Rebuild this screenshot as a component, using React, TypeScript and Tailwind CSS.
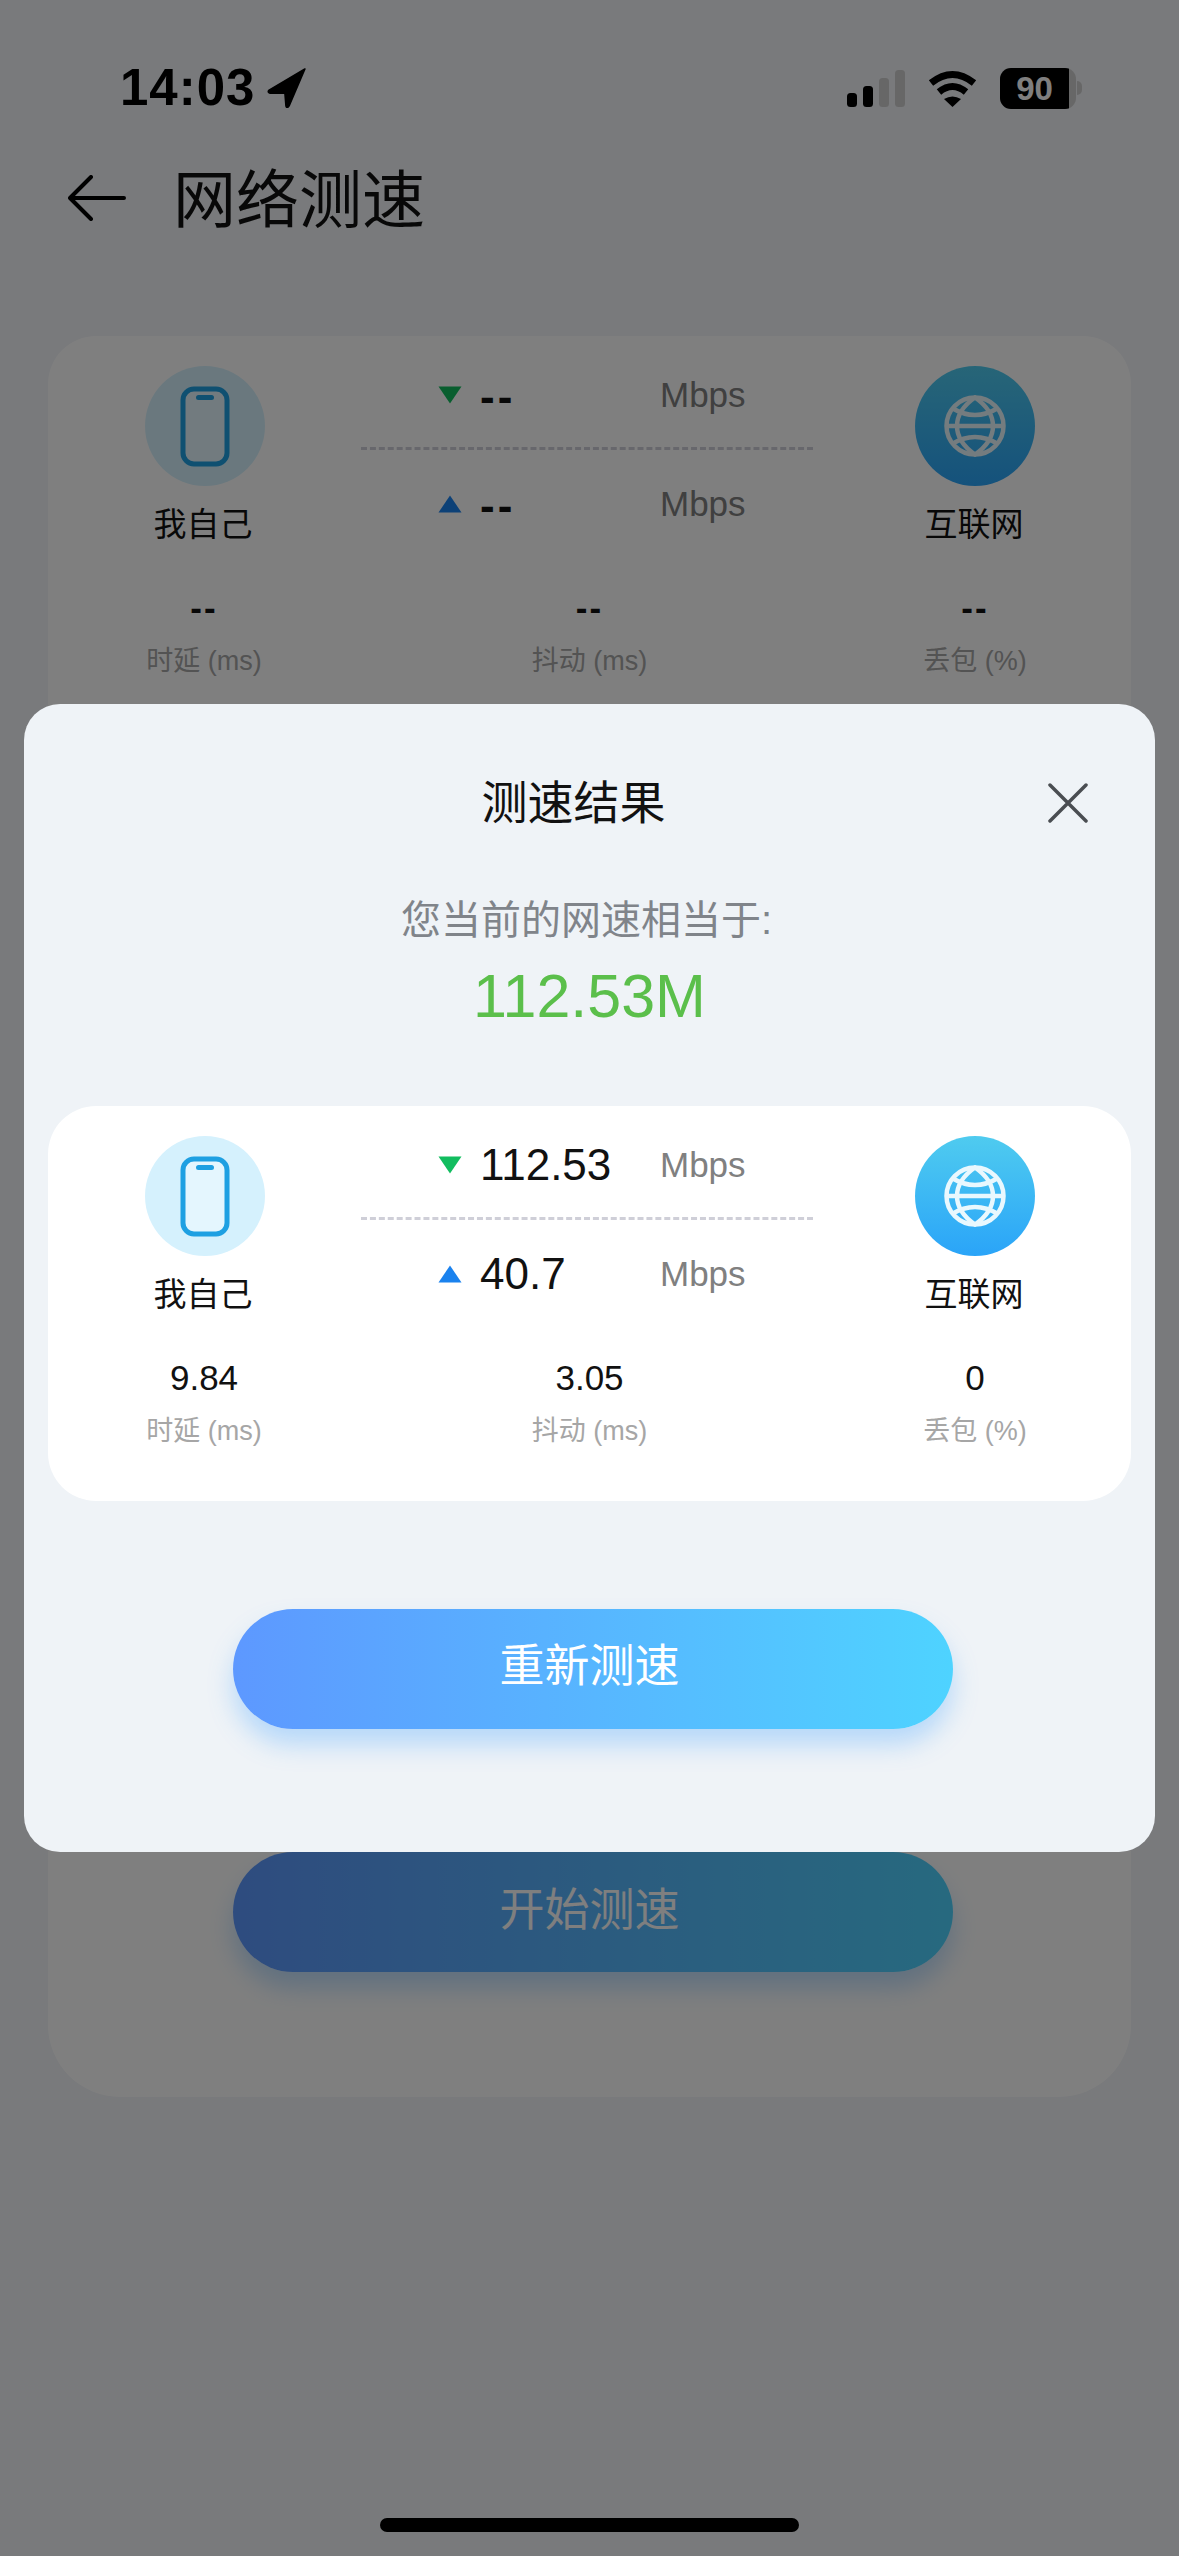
const FONT = "font-['Liberation_Sans','Noto_Sans_CJK_SC',sans-serif]";

function PhoneIcon() {
  return (
    <svg width="50" height="81" viewBox="0 0 50 81" fill="none">
      <rect x="3" y="3" width="44" height="75" rx="11" fill="#e4f6fe" stroke="#1ea0e2" strokeWidth="5" />
      <rect x="16" y="9" width="18" height="5" rx="2.5" fill="#1ea0e2" />
    </svg>
  );
}

function GlobeIcon() {
  return (
    <svg width="64" height="62" viewBox="0 0 64 62" fill="none" stroke="#e9f8fe" strokeWidth="4.5">
      <circle cx="32" cy="31" r="28.5" />
      <path d="M32 2.5Q14 15 14 31T32 59.5Q50 47 50 31T32 2.5Z" />
      <path d="M3.5 31H60.5M9 13Q32 27 55 13M9 49Q32 35 55 49" />
    </svg>
  );
}

function Triangle({ up }: { up?: boolean }) {
  return (
    <svg width="24" height="18" viewBox="0 0 24 18" className="shrink-0">
      {up ? (
        <path d="M12 0.5L23.5 17.5H0.5Z" fill="#1a82ee" />
      ) : (
        <path d="M0.5 0.5H23.5L12 17.5Z" fill="#12bd5f" />
      )}
    </svg>
  );
}

function SpeedRow({ up, value }: { up?: boolean; value: string }) {
  const empty = value === "--";
  return (
    <div className="flex h-[60px] items-center pl-[77px]">
      <Triangle up={up} />
      <div className={`ml-[18px] w-[180px] text-[44px] leading-[60px] text-[#111] ${empty ? "pt-[4px] font-bold tracking-[3px]" : ""}`}>{value}</div>
      <div className="text-[35px] leading-[60px] text-[#808080]">Mbps</div>
    </div>
  );
}

function Stat({ value, label }: { value: string; label: string }) {
  const empty = value === "--";
  return (
    <div className="flex flex-col items-center">
      <div className={`h-[40px] text-[35px] leading-[40px] text-[#111] ${empty ? "font-bold tracking-[2px]" : ""}`}>{value}</div>
      <div className="mt-[15px] h-[36px] text-[27px] leading-[36px] text-[#a6a6a6]">{label}</div>
    </div>
  );
}

function SpeedPanel({ down, up, stats }: { down: string; up: string; stats: string[] }) {
  return (
    <div className="h-[395px]">
      <div className="grid grid-cols-[312px_1fr_312px]">
        <div className="flex flex-col items-center pt-[30px]">
          <div className="ml-[2px] flex h-[120px] w-[120px] items-center justify-center rounded-full bg-[#d5f1fd]">
            <PhoneIcon />
          </div>
          <div className="mt-[17px] h-[44px] pr-[2px] text-[33px] leading-[44px] text-[#111]">我自己</div>
        </div>
        <div className="ml-[1px] w-[452px] pt-[29px]">
          <SpeedRow value={down} />
          <div className="mt-[22px] mb-[24px] border-t-[3px] border-dashed border-[#cfcfd8]" />
          <SpeedRow up value={up} />
        </div>
        <div className="flex flex-col items-center pt-[30px]">
          <div className="flex h-[120px] w-[120px] items-center justify-center rounded-full bg-gradient-to-b from-[#4fcbef] to-[#2aa4f8]">
            <GlobeIcon />
          </div>
          <div className="mt-[17px] h-[44px] pr-[2px] text-[33px] leading-[44px] text-[#111]">互联网</div>
        </div>
      </div>
      <div className="mt-[41px] grid grid-cols-[312px_1fr_312px]">
        <Stat value={stats[0]} label="时延 (ms)" />
        <Stat value={stats[1]} label="抖动 (ms)" />
        <Stat value={stats[2]} label="丢包 (%)" />
      </div>
    </div>
  );
}

function StatusBar() {
  return (
    <div className="flex h-[130px] items-center justify-between pt-[46px] pr-[97px] pl-[120px]">
      <div className="flex items-center">
        <span className="text-[51px] leading-[50px] font-bold tracking-[1px] text-black">14:03</span>
        <svg width="40" height="40" viewBox="0 0 38 38" className="ml-[12px]">
          <path d="M36 1L2 21Q0 23 3 24L17 24L18 36Q19 39 21 36Z" fill="#000" stroke="#000" strokeWidth="1.5" strokeLinejoin="round" />
        </svg>
      </div>
      <div className="flex items-center">
        <svg width="58" height="37" viewBox="0 0 58 37">
          <rect x="0" y="23" width="10" height="14" rx="3.5" fill="#000" />
          <rect x="16" y="16" width="10" height="21" rx="3.5" fill="#000" />
          <rect x="32" y="8" width="10" height="29" rx="3.5" fill="#cfcfcf" />
          <rect x="48" y="0" width="10" height="37" rx="3.5" fill="#cfcfcf" />
        </svg>
        <svg width="49" height="37" viewBox="0 0 49 37" fill="none" className="ml-[23px]">
          <path d="M3 13Q24.5 -4 46 13" stroke="#000" strokeWidth="7" />
          <path d="M11 22Q24.5 11 38 22" stroke="#000" strokeWidth="7" />
          <path d="M16 29Q24.5 24 33 29L24.5 37Z" fill="#000" />
        </svg>
        <div className="ml-[23px] flex items-center">
          <div className="flex h-[41px] w-[76px] overflow-hidden rounded-[11px] bg-[#cfcfcf]">
            <div className="flex h-full w-[69px] items-center justify-center bg-black text-[33px] leading-none font-bold text-white">90</div>
          </div>
          <div className="ml-[1px] h-[14px] w-[5px] rounded-r-full bg-[#cfcfcf]" />
        </div>
      </div>
    </div>
  );
}

export default function App() {
  return (
    <div className={`relative h-[2556px] w-[1179px] overflow-hidden bg-[#f2f4f8] ${FONT}`}>
      <StatusBar />
      <div className="flex h-[136px] items-center pl-[68px]">
        <svg width="58" height="46" viewBox="0 0 58 46" fill="none" stroke="#000" strokeWidth="4" strokeLinecap="round" strokeLinejoin="round">
          <path d="M56 23H3M23 2L2 23L23 44" />
        </svg>
        <div className="ml-[47px] pt-[4px] text-[63px] leading-[80px] text-[#111]">网络测速</div>
      </div>

      <div className="mx-[48px] mt-[70px] h-[1761px] rounded-t-[48px] rounded-b-[72px] bg-white">
        <SpeedPanel down="--" up="--" stats={["--", "--", "--"]} />
        <div className="mt-[1121px] ml-[185px] flex h-[120px] w-[720px] items-center justify-center rounded-full bg-gradient-to-r from-[#5d98ff] to-[#4ed3ff] pr-[7px] pb-[2px] text-[45px] text-white shadow-[0_16px_24px_rgba(80,170,255,0.35)]">
          开始测速
        </div>
      </div>

      <div className="mx-auto mt-[421px] h-[14px] w-[419px] rounded-full bg-black" />

      <div className="absolute inset-0 bg-black/50" />

      <div className="absolute top-[704px] left-[24px] h-[1148px] w-[1131px] rounded-[36px] bg-[#eff3f7]">
        <div className="relative mt-[72px] flex h-[54px] items-center justify-center pr-[32px] text-[46px] leading-[54px] text-[#111]">
          测速结果
          <svg width="40" height="40" viewBox="0 0 40 40" fill="none" stroke="#4a4d52" strokeWidth="3.5" strokeLinecap="round" className="absolute top-[7px] right-[67px]">
            <path d="M2 2L38 38M38 2L2 38" />
          </svg>
        </div>
        <div className="mt-[66px] pr-[6px] text-center text-[40px] leading-[48px] text-[#80848a]">您当前的网速相当于:</div>
        <div className="mt-[16px] text-center text-[61px] leading-[72px] text-[#5bbf4b]">112.53M</div>
        <div className="mx-[24px] mt-[74px] h-[395px] rounded-[48px] bg-white">
          <SpeedPanel down="112.53" up="40.7" stats={["9.84", "3.05", "0"]} />
        </div>
        <div className="mt-[108px] ml-[209px] flex h-[120px] w-[720px] items-center justify-center rounded-full bg-gradient-to-r from-[#5d98ff] to-[#4ed3ff] pr-[7px] pb-[4px] text-[45px] text-white shadow-[0_16px_24px_rgba(80,170,255,0.35)]">
          重新测速
        </div>
      </div>
    </div>
  );
}
